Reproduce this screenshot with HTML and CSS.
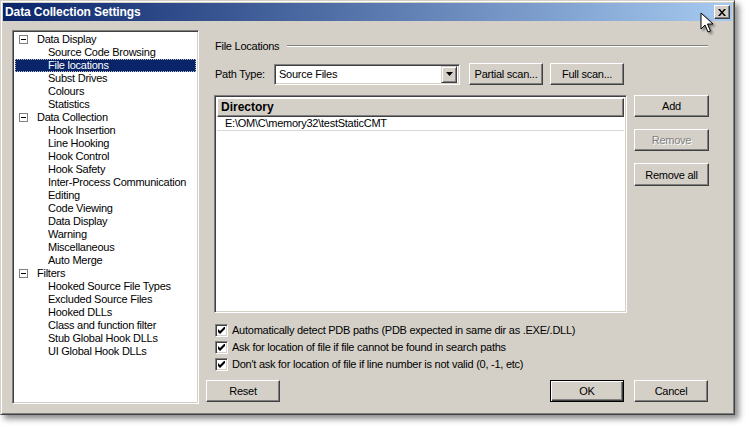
FILE: index.html
```html
<!DOCTYPE html>
<html>
<head>
<meta charset="utf-8">
<link rel="stylesheet" href="styles.css">
</head>
<body>
<div class="window">
  <div class="titlebar">
    <span class="title">Data Collection Settings</span>
    <span class="close"><svg width="8" height="7" viewBox="0 0 8 7"><path d="M0 0h2l2 2.5L6 0h2L5 3.5 8 7H6L4 4.5 2 7H0l3-3.5z" fill="#000"/></svg></span>
  </div>
  <div class="client">
    <div class="tree">
      <div class="node parent"><span class="expander"></span>Data Display</div>
      <div class="node child">Source Code Browsing</div>
      <div class="node child selected">File locations</div>
      <div class="node child">Subst Drives</div>
      <div class="node child">Colours</div>
      <div class="node child">Statistics</div>
      <div class="node parent"><span class="expander"></span>Data Collection</div>
      <div class="node child">Hook Insertion</div>
      <div class="node child">Line Hooking</div>
      <div class="node child">Hook Control</div>
      <div class="node child">Hook Safety</div>
      <div class="node child">Inter-Process Communication</div>
      <div class="node child">Editing</div>
      <div class="node child">Code Viewing</div>
      <div class="node child">Data Display</div>
      <div class="node child">Warning</div>
      <div class="node child">Miscellaneous</div>
      <div class="node child">Auto Merge</div>
      <div class="node parent"><span class="expander"></span>Filters</div>
      <div class="node child">Hooked Source File Types</div>
      <div class="node child">Excluded Source Files</div>
      <div class="node child">Hooked DLLs</div>
      <div class="node child">Class and function filter</div>
      <div class="node child">Stub Global Hook DLLs</div>
      <div class="node child">UI Global Hook DLLs</div>
    </div>
    <div class="panel">
      <div class="group-title"><span>File Locations</span><span class="etch"></span></div>
      <div class="path-row">
        <span class="path-label">Path Type:</span>
        <div class="combo">
          <span class="combo-text">Source Files</span>
          <span class="combo-btn"><svg width="7" height="4" viewBox="0 0 7 4"><path d="M0 0h7L3.5 4z" fill="#000"/></svg></span>
        </div>
        <button class="btn scan-partial">Partial scan...</button>
        <button class="btn scan-full">Full scan...</button>
      </div>
      <div class="list-row">
        <div class="list">
          <div class="list-header"><span class="header-cell">Directory</span></div>
          <div class="list-item">E:\OM\C\memory32\testStaticCMT</div>
        </div>
        <div class="side-buttons">
          <button class="btn side">Add</button>
          <button class="btn side disabled">Remove</button>
          <button class="btn side">Remove all</button>
        </div>
      </div>
      <div class="checks">
        <div class="check-row"><span class="checkbox"><svg width="7" height="7" viewBox="0 0 7 7"><path d="M0 2v3l2 2 5-5V-1L2 4z" fill="#000"/></svg></span>Automatically detect PDB paths (PDB expected in same dir as .EXE/.DLL)</div>
        <div class="check-row"><span class="checkbox"><svg width="7" height="7" viewBox="0 0 7 7"><path d="M0 2v3l2 2 5-5V-1L2 4z" fill="#000"/></svg></span>Ask for location of file if file cannot be found in search paths</div>
        <div class="check-row"><span class="checkbox"><svg width="7" height="7" viewBox="0 0 7 7"><path d="M0 2v3l2 2 5-5V-1L2 4z" fill="#000"/></svg></span>Don't ask for location of file if line number is not valid (0, -1, etc)</div>
      </div>
      <div class="footer">
        <button class="btn foot">Reset</button>
        <span class="spacer"></span>
        <button class="btn foot default">OK</button>
        <button class="btn foot">Cancel</button>
      </div>
    </div>
  </div>
  <svg class="cursor" width="14" height="22" viewBox="0 0 14 22"><path d="M1 1v16l4-4 3 7 2.5-1-3-7h5.5z" fill="#fff" stroke="#000" stroke-width="1" stroke-linejoin="miter"/></svg>
</div>
</body>
</html>
```
FILE: styles.css
```css
* { box-sizing: border-box; }
html, body { margin: 0; padding: 0; background: #fff; }
body {
  font-family: "Liberation Sans", Arial, sans-serif;
  font-size: 11px;
  letter-spacing: -0.25px;
  color: #000;
  width: 749px;
  height: 429px;
  overflow: hidden;
}
.window {
  position: relative;
  width: 735px;
  height: 415px;
  background: #d4d0c8;
  border: 1px solid;
  border-color: #d4d0c8 #404040 #404040 #d4d0c8;
  box-shadow: inset 1px 1px #fff, inset -1px -1px #808080, 4px 4px 6px rgba(0,0,0,0.45);
  padding: 2px;
}
.titlebar {
  height: 18px;
  background: linear-gradient(to right, #0a246a, #a6caf0);
  display: flex;
  align-items: center;
  justify-content: space-between;
  padding: 0 2px 0 2px;
}
.title {
  color: #fff;
  font-weight: bold;
  font-size: 12px;
  letter-spacing: -0.1px;
}
.close {
  width: 16px;
  height: 14px;
  background: #d4d0c8;
  border: 1px solid;
  border-color: #fff #404040 #404040 #fff;
  box-shadow: inset -1px -1px #808080;
  display: flex;
  align-items: center;
  justify-content: center;
}
.client {
  display: flex;
  padding: 9px 0 0 9px;
  gap: 7px;
}
.tree {
  width: 187px;
  height: 374px;
  background: #fff;
  border: 1px solid;
  border-color: #808080 #fff #fff #808080;
  box-shadow: inset 1px 1px #404040, inset -1px -1px #d4d0c8;
  padding: 2px 2px 2px 2px;
}
.node {
  height: 13px;
  line-height: 13px;
  white-space: nowrap;
  display: flex;
  align-items: center;
}
.parent { padding-left: 4px; }
.child { padding-left: 33px; }
.expander {
  width: 9px;
  height: 9px;
  border: 1px solid #808080;
  background: #fff;
  margin-right: 9px;
  position: relative;
}
.expander::after {
  content: "";
  position: absolute;
  left: 1px;
  top: 3px;
  width: 5px;
  height: 1px;
  background: #000;
}
.selected {
  background: #0a246a;
  color: #fff;
  outline: 1px dotted #c0c0c0;
  outline-offset: -1px;
}
.panel {
  width: 518px;
  display: flex;
  flex-direction: column;
}
.group-title {
  display: flex;
  align-items: center;
  height: 13px;
  margin: 9px 16px 0 9px;
  gap: 8px;
}
.etch {
  flex: 1;
  height: 2px;
  border-top: 1px solid #808080;
  border-bottom: 1px solid #fff;
}
.path-row {
  display: flex;
  align-items: center;
  height: 22px;
  margin-top: 11px;
  padding-left: 9px;
}
.path-label { width: 59px; }
.combo {
  width: 186px;
  height: 21px;
  background: #fff;
  border: 1px solid;
  border-color: #808080 #fff #fff #808080;
  box-shadow: inset 1px 1px #404040, inset -1px -1px #d4d0c8;
  display: flex;
  align-items: center;
  justify-content: space-between;
  padding: 2px;
  margin-right: 9px;
}
.combo-text { padding-left: 2px; }
.combo-btn {
  width: 16px;
  height: 17px;
  background: #d4d0c8;
  border: 1px solid;
  border-color: #d4d0c8 #404040 #404040 #d4d0c8;
  box-shadow: inset 1px 1px #fff, inset -1px -1px #808080;
  display: flex;
  align-items: center;
  justify-content: center;
}
.btn {
  font-family: "Liberation Sans", Arial, sans-serif;
  font-size: 11px;
  letter-spacing: -0.25px;
  color: #000;
  background: #d4d0c8;
  border: 1px solid;
  border-color: #fff #404040 #404040 #fff;
  box-shadow: inset -1px -1px #808080;
  padding: 0;
  margin: 0;
  height: 22px;
  width: 74px;
}
.scan-partial { margin-right: 7px; }
.list-row {
  display: flex;
  margin-top: 10px;
  padding-left: 8px;
  gap: 7px;
}
.list {
  width: 413px;
  height: 218px;
  background: #fff;
  border: 1px solid;
  border-color: #808080 #fff #fff #808080;
  box-shadow: inset 1px 1px #404040, inset -1px -1px #d4d0c8;
  padding: 2px 2px 2px 2px;
}
.list-header {
  height: 19px;
  display: flex;
}
.header-cell {
  flex: 1;
  background: #d4d0c8;
  border: 1px solid;
  border-color: #fff #404040 #404040 #fff;
  box-shadow: inset -1px -1px #808080;
  font-weight: bold;
  font-size: 12px;
  letter-spacing: 0;
  line-height: 16px;
  padding-left: 3px;
}
.list-item {
  height: 14px;
  line-height: 13px;
  padding-left: 8px;
  border-bottom: 1px solid #d8d8d8;
}
.side-buttons {
  display: flex;
  flex-direction: column;
  width: 75px;
}
.btn.side { width: 75px; height: 22px; }
.btn.side + .btn.side { margin-top: 12px; }
.btn.side:last-child { margin-top: 7px; height: 23px; }
.disabled {
  color: #808080;
  text-shadow: 1px 1px #fff;
}
.checks {
  margin-top: 11px;
  padding-left: 9px;
  display: flex;
  flex-direction: column;
}
.check-row {
  height: 17px;
  display: flex;
  align-items: flex-start;
  line-height: 13px;
  white-space: nowrap;
}
.checkbox {
  width: 13px;
  height: 13px;
  background: #fff;
  border: 1px solid;
  border-color: #808080 #fff #fff #808080;
  box-shadow: inset 1px 1px #404040, inset -1px -1px #d4d0c8;
  display: flex;
  align-items: center;
  justify-content: center;
  margin-right: 4px;
  flex: none;
}
.footer {
  display: flex;
  margin-top: 5px;
  padding-right: 16px;
  gap: 10px;
}
.spacer { flex: 1; }
.btn.foot { width: 74px; height: 22px; }
.btn.default {
  border: 1px solid #000;
  box-shadow: inset 1px 1px #fff, inset -1px -1px #404040, inset -2px -2px #808080;
}
.cursor {
  position: absolute;
  left: 699px;
  top: 11px;
  filter: drop-shadow(2px 2px 1px rgba(0,0,0,0.4));
}
```
